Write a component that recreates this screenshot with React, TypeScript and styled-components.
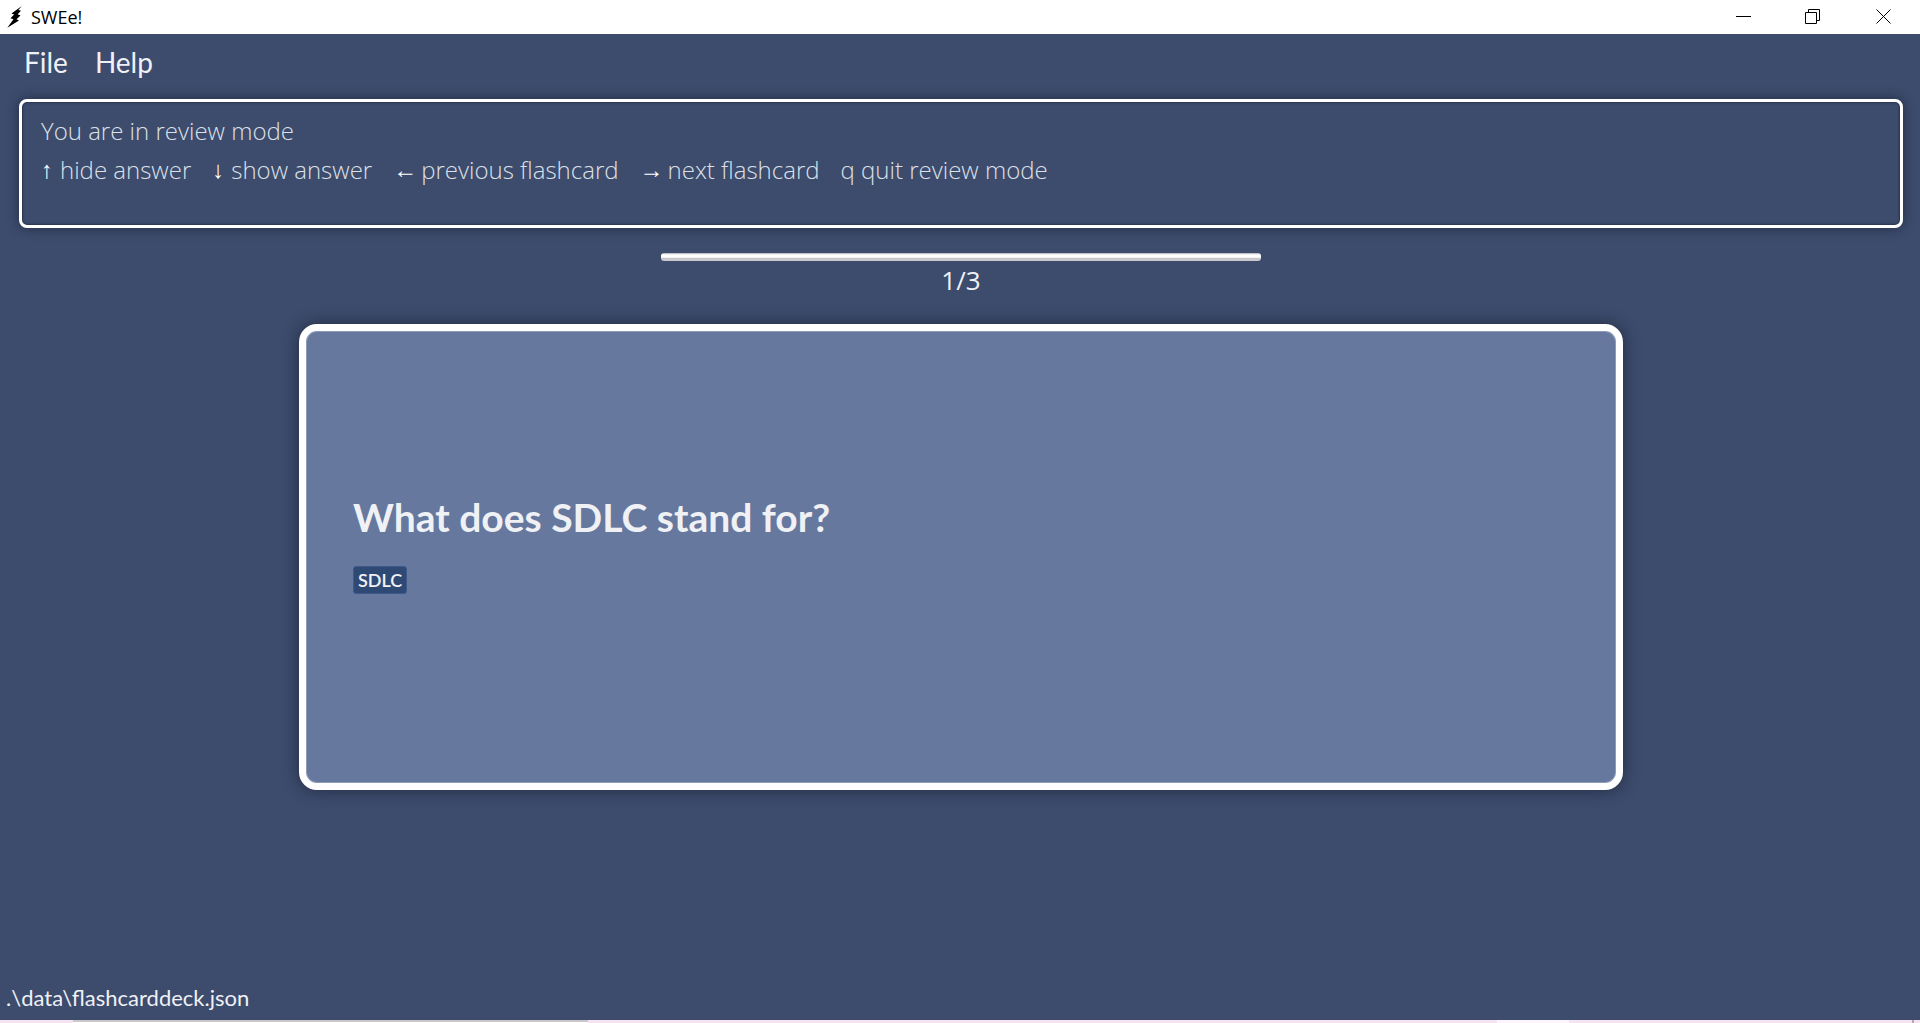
import React from "react";
import styled, { createGlobalStyle } from "styled-components";

const uiFont = `Lato, "Open Sans", sans-serif`;
const systemFont = `"Open Sans", "Noto Sans", sans-serif`;

const GlobalStyle = createGlobalStyle`
  *, *::before, *::after { box-sizing: border-box; }
  body { margin: 0; background: #3d4b6d; }
  button { border: 0; padding: 0; background: none; color: inherit; font: inherit; }
`;

const Window = styled.div`
  min-height: 100vh;
  display: flex;
  flex-direction: column;
  background: #3d4b6d;
  color: #eff1f5;
  font-family: ${uiFont};
`;

const TitleBar = styled.header`
  height: 34px;
  display: flex;
  align-items: flex-start;
  background: #fff;
  color: #000;
`;

const Title = styled.h1`
  flex: 1;
  margin: 0 0 0 8px;
  font: 400 18px/34px ${systemFont};
`;

const AppIcon = styled.svg`
  width: 16px;
  height: 24px;
  margin: 5px 0 0 7px;
`;

const WindowButton = styled.button<{ $width: number }>`
  width: ${(p) => p.$width}px;
  height: 33px;
  display: grid;
  place-items: center;
  svg {
    width: 15px;
    height: 15px;
    fill: none;
    stroke: #000;
  }
`;

const MenuBar = styled.nav`
  display: flex;
  gap: 27px;
  height: 65px;
  padding: 10px 24px 0;
`;

const MenuButton = styled.button`
  height: 36px;
  font-size: 28px;
  line-height: 36px;
`;

const MessageBox = styled.section`
  min-height: 129px;
  margin: 0 17px 0 19px;
  padding: 9px 19px;
  border: 3px solid #fff;
  border-radius: 8px;
  box-shadow: 0 0 12px rgba(24, 32, 48, 0.7), inset 0 0 2px 1px rgba(24, 32, 48, 0.5);
  color: #dce0e7;
  font: 300 24px/39px ${systemFont};
`;

const Message = styled.p`
  margin: 0;
`;

const Hints = styled.ul`
  display: flex;
  flex-wrap: wrap;
  column-gap: 21px;
  margin: 0;
  padding: 0;
  list-style: none;
`;

const Hint = styled.li`
  display: flex;
  white-space: pre;
`;

const Arrow = styled.span<{ $width: number }>`
  width: ${(p) => p.$width}px;
  color: #fff;
  font-family: "Liberation Sans", "DejaVu Sans", sans-serif;
  font-size: 24px;
  font-weight: 700;
`;

const Review = styled.main`
  flex: 1;
  display: flex;
  flex-direction: column;
  align-items: center;
  padding: 25px 17px 0 19px;
`;

const Progress = styled.progress`
  appearance: none;
  display: block;
  width: 600px;
  height: 8px;
  border: 0;
  border-radius: 3px;
  overflow: hidden;
  background: #c8c8cc;
  &::-webkit-progress-bar {
    background: #c8c8cc;
  }
  &::-webkit-progress-value {
    background: linear-gradient(#c4c4c8 0 1px, #f4f2f0 1px 2px, #fff 2px 4px, #f2f0f0 4px 5px, #c8c8cc 5px);
  }
`;

const Counter = styled.label`
  font-family: ${systemFont};
  font-size: 26px;
  line-height: 39px;
`;

const Card = styled.article`
  width: 100%;
  max-width: 1324px;
  min-height: 466px;
  margin-top: 24px;
  padding: 0 47px 28px;
  display: flex;
  flex-direction: column;
  justify-content: center;
  align-items: flex-start;
  gap: 25px;
  border: 7px solid #fff;
  border-radius: 18px;
  background: #66789e;
  box-shadow: 0 0 16px rgba(24, 32, 48, 0.75), inset 0 0 0 1px #8d9ab8;
`;

const Question = styled.h2`
  margin: 0;
  font-size: 39px;
  line-height: 48px;
  font-weight: 700;
`;

const Tag = styled.span`
  padding: 0 4px;
  border: 1px solid #41588a;
  border-radius: 3px;
  background: #2f4975;
  font-size: 18px;
  line-height: 26px;
  font-weight: 600;
`;

const StatusBar = styled.footer`
  height: 38px;
  padding-left: 6px;
  font-size: 22px;
  line-height: 32px;
`;

const Desktop = styled.div`
  display: flex;
  height: 3px;
`;

const DesktopPiece = styled.div<{ $grow: number; $color: string; $line?: string }>`
  flex: ${(p) => p.$grow} 1 0;
  background: ${(p) => p.$color};
  border-top: ${(p) => (p.$line ? `2px solid ${p.$line}` : "0")};
`;

const hints: { key: string; width: number; text: string }[] = [
  { key: "↑", width: 19, text: "hide answer" },
  { key: "↓", width: 19, text: "show answer" },
  { key: "←", width: 28, text: "previous flashcard" },
  { key: "→", width: 28, text: "next flashcard" },
];

export default function App() {
  return (
    <Window>
      <GlobalStyle />
      <TitleBar>
        <AppIcon viewBox="0 0 16 24" aria-hidden="true">
          <path d="M14.8 1 4.500 8.500l2.600 1-3.600 3.700 3 1L.3 22.700 12 15.500l-2.500-1.300 4-3.700-2.900-1.300L14 5.700l-2.600-.8z" />
        </AppIcon>
        <Title>SWEe!</Title>
        <WindowButton $width={69} aria-label="Minimize">
          <svg viewBox="0 0 15 15"><path d="M0 7.5h15" /></svg>
        </WindowButton>
        <WindowButton $width={69} aria-label="Restore">
          <svg viewBox="0 0 15 15"><path d="M.5 3.5h11v11H.5zM3.5 3.5v-3h11v11h-3" /></svg>
        </WindowButton>
        <WindowButton $width={73} aria-label="Close">
          <svg viewBox="0 0 15 15"><path d="m.5.5 14 14m0-14-14 14" /></svg>
        </WindowButton>
      </TitleBar>
      <MenuBar>
        <MenuButton>File</MenuButton>
        <MenuButton>Help</MenuButton>
      </MenuBar>
      <MessageBox>
        <Message>You are in review mode</Message>
        <Hints>
          {hints.map((h) => (
            <Hint key={h.text}>
              <Arrow $width={h.width}>{h.key}</Arrow>
              {h.text}
            </Hint>
          ))}
          <Hint>q quit review mode</Hint>
        </Hints>
      </MessageBox>
      <Review>
        <Progress id="progress" value={1} max={1} />
        <Counter htmlFor="progress">1/3</Counter>
        <Card>
          <Question>What does SDLC stand for?</Question>
          <Tag>SDLC</Tag>
        </Card>
      </Review>
      <StatusBar>.\data\flashcarddeck.json</StatusBar>
      <Desktop aria-hidden="true">
        <DesktopPiece $grow={73} $color="#f5e3f2" />
        <DesktopPiece $grow={515} $color="#fff" $line="#cbc8cb" />
        <DesktopPiece $grow={909} $color="#f5e3f2" />
        <DesktopPiece $grow={72} $color="#fcf5fb" />
        <DesktopPiece $grow={343} $color="#f5e3f2" />
        <DesktopPiece $grow={2} $color="#b5a8b8" />
        <DesktopPiece $grow={6} $color="#f5e3f2" />
      </Desktop>
    </Window>
  );
}
